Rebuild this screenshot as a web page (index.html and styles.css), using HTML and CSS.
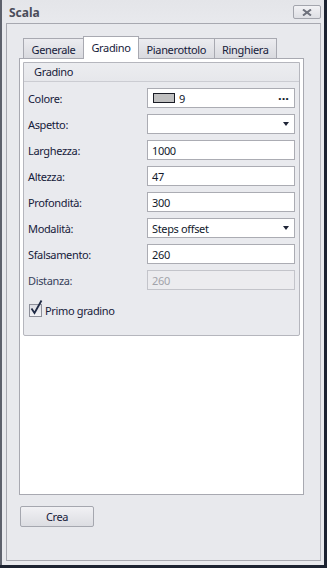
FILE: index.html
```html
<!DOCTYPE html>
<html>
<head>
<meta charset="utf-8">
<link rel="stylesheet" href="styles.css">
</head>
<body>
<div class="window">
  <div class="titlebar">
    <span class="title">Scala</span>
    <button class="close" aria-label="Chiudi">
      <svg width="10" height="7" viewBox="0 0 10 7"><path d="M1 0.5 L9 6.5 M9 0.5 L1 6.5" stroke="#6e717c" stroke-width="2" fill="none"/></svg>
    </button>
  </div>
  <div class="frame">
    <div class="tabs">
      <div class="tab">Generale</div>
      <div class="tab active">Gradino</div>
      <div class="tab">Pianerottolo</div>
      <div class="tab">Ringhiera</div>
    </div>
    <div class="panel">
      <div class="group">
        <div class="group-head">Gradino</div>
        <div class="rows">
          <div class="row"><span class="label">Colore:</span>
            <div class="field color"><span class="swatch"></span><span class="cval">9</span><span class="dots">&middot;&middot;&middot;</span></div></div>
          <div class="row"><span class="label">Aspetto:</span>
            <div class="field select"><span></span><span class="arrow"></span></div></div>
          <div class="row"><span class="label">Larghezza:</span><div class="field">1000</div></div>
          <div class="row"><span class="label">Altezza:</span><div class="field">47</div></div>
          <div class="row"><span class="label">Profondità:</span><div class="field">300</div></div>
          <div class="row"><span class="label">Modalità:</span>
            <div class="field select"><span>Steps offset</span><span class="arrow"></span></div></div>
          <div class="row"><span class="label">Sfalsamento:</span><div class="field">260</div></div>
          <div class="row"><span class="label disabled">Distanza:</span><div class="field off">260</div></div>
          <div class="check">
            <span class="box"><svg width="16" height="17" viewBox="0 0 16 17"><path d="M3.5 9.5 L6.5 14 L13.5 1.5" stroke="#1f2a44" stroke-width="1.8" fill="none"/></svg></span>
            <span>Primo gradino</span>
          </div>
        </div>
      </div>
    </div>
    <button class="btn">Crea</button>
  </div>
</div>
</body>
</html>
```
FILE: styles.css
```css
* { box-sizing: border-box; }
html, body { margin: 0; padding: 0; }
body {
  background: #1c2331;
  width: 327px;
  height: 568px;
  font-family: "Noto Sans", "DejaVu Sans", sans-serif;
  font-size: 11px;
  letter-spacing: -0.35px;
  color: #16203a;
}
.window {
  width: 324px;
  height: 565px;
  background: #e8e9ed;
  border-left: 2px solid #5d616c;
  display: flex;
  flex-direction: column;
}
.titlebar {
  height: 23px;
  display: flex;
  align-items: flex-start;
  justify-content: space-between;
  padding: 5px 3px 0 7px;
  background: linear-gradient(#e4e5e9, #e8e9ed);
}
.title {
  font-weight: bold;
  font-size: 12px;
  letter-spacing: 0;
  color: #4a4d5a;
  line-height: 15px;
}
.close {
  width: 28px;
  height: 14px;
  padding: 0;
  border: 1px solid #a3a5ad;
  border-radius: 2px;
  background: linear-gradient(#f2f2f5, #dedfe4);
  display: flex;
  align-items: center;
  justify-content: center;
}
.frame {
  margin-left: 4px;
  width: 315px;
  height: 538px;
  border: 1px solid #a7a8b0;
  border-right-color: #b8b9c0;
  padding: 12px 0 0 12px;
  display: flex;
  flex-direction: column;
  align-items: flex-start;
}
.tabs {
  display: flex;
  align-items: flex-end;
  padding-left: 4px;
  height: 22px;
}
.tab {
  height: 20px;
  padding: 1px 7.5px 0;
  line-height: 19px;
  border: 1px solid #a8a9b1;
  border-bottom: none;
  margin-right: -1px;
  background: linear-gradient(#ececf0, #d9dadf);
  white-space: nowrap;
}
.tab.active {
  height: 23px;
  padding: 0 7.5px;
  margin-bottom: -1px;
  background: #fff;
  line-height: 21px;
  position: relative;
  z-index: 1;
}
.panel {
  width: 285px;
  height: 437px;
  background: #fff;
  border: 1px solid #a8a9b1;
  padding: 3px 3px 0 3px;
}
.group {
  width: 277px;
  height: 274px;
  background: #e9eaee;
  border: 1px solid #b5b6bd;
  border-radius: 0 0 2px 2px;
}
.group-head {
  height: 19px;
  padding-left: 10px;
  line-height: 18px;
  border-bottom: 1px solid #cbccd2;
  background: linear-gradient(#ecedf0, #e6e7eb);
}
.rows {
  display: flex;
  flex-direction: column;
  gap: 6px;
  padding: 6px 3px 0 4px;
}
.row {
  display: flex;
  align-items: center;
  height: 20px;
}
.label {
  width: 119px;
  flex: none;
}
.label.disabled { color: #37415a; }
.field {
  width: 148px;
  height: 20px;
  border: 1px solid #abacb3;
  background: #fff;
  padding: 0 4px;
  display: flex;
  align-items: center;
  color: #121a2c;
}
.field.off {
  background: #ececef;
  border-color: #c3c4ca;
  color: #a2a3aa;
}
.select { justify-content: space-between; padding-right: 5px; }
.arrow {
  width: 0;
  height: 0;
  border-left: 3px solid transparent;
  border-right: 3px solid transparent;
  border-top: 4px solid #1e2436;
}
.color { padding-left: 5px; }
.swatch {
  width: 22px;
  height: 10px;
  background: #c0c0c0;
  border: 1px solid #1b1d26;
  margin-right: 4px;
}
.cval { flex: 1; }
.dots {
  font-weight: bold;
  font-size: 13px;
  letter-spacing: 0;
  line-height: 10px;
  padding-right: 1px;
}
.check {
  display: flex;
  align-items: center;
  gap: 3px;
  margin-top: 7px;
  padding-left: 1px;
}
.box {
  width: 13px;
  height: 13px;
  border: 1px solid #8d8f99;
  background: linear-gradient(#dcdde3, #f4f4f7);
  position: relative;
}
.box svg {
  position: absolute;
  left: -2px;
  top: -6px;
}
.btn {
  margin-top: 11px;
  margin-left: 1px;
  width: 74px;
  height: 21px;
  border: 1px solid #a5a7af;
  border-radius: 2px;
  background: linear-gradient(#f1f1f4, #dcdde2);
  font-family: inherit;
  font-size: 11px;
  letter-spacing: -0.35px;
  color: #16203a;
  padding: 0;
}
```
